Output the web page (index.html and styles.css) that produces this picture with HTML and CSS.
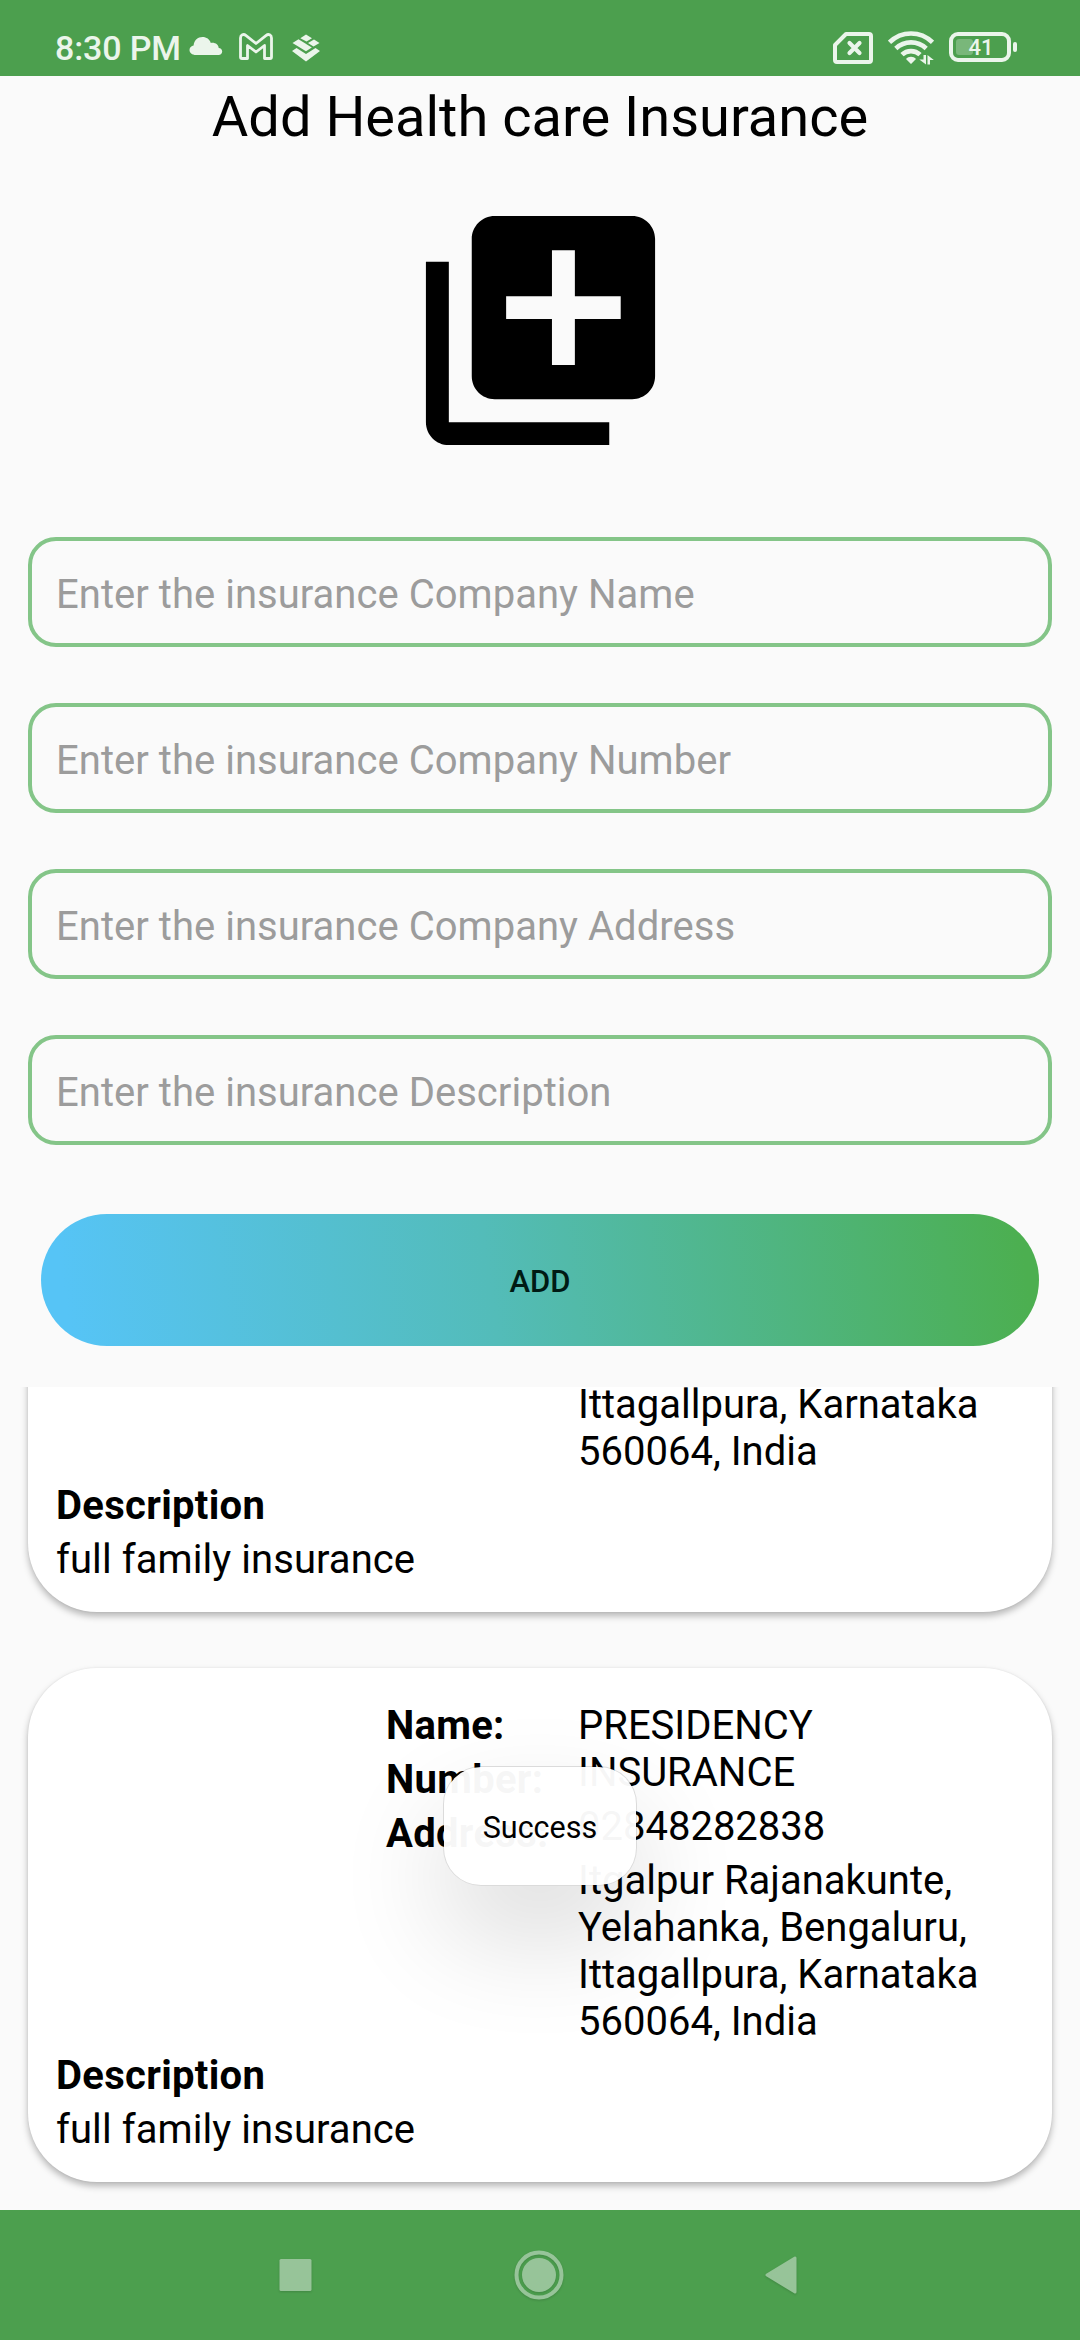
FILE: index.html
```html
<!DOCTYPE html>
<html lang="en">
<head>
<meta charset="utf-8">
<title>Add Health care Insurance</title>
<link rel="stylesheet" href="styles.css">
</head>
<body>
<div class="screen">
  <header class="status">
    <span class="time">8:30 PM</span>
    <svg class="cloud" width="34" height="20" viewBox="0 0 34 20"><path d="M7 19C3 19 .5 16.800.5 14c0-2.600 1.900-4.300 4.100-4.600C5 4.500 8.800 1 13.500 1c4 0 7.100 2.300 8.300 5.900C26.500 6.300 29.500 8.700 29.700 12c2 .2 3.500 1.600 3.500 3.500S31.700 19 29.500 19z" fill="currentColor"/></svg>
    <svg class="mail" width="34" height="28" viewBox="0 0 34 28"><path d="M3 25.500a1.500 1.500 0 0 1-1.500-1.500V5C1.500 1.800 4.500.6 6.800 2.400L17 10.500 27.200 2.400C29.500.6 32.500 1.800 32.500 5v19a1.500 1.500 0 0 1-1.500 1.500h-5.500V12.500L17 19 8.500 12.500v13z" fill="none" stroke="currentColor" stroke-width="2.800" stroke-linejoin="round"/></svg>
    <svg class="layers" width="28" height="28" viewBox="0 0 28 28"><g fill="currentColor"><path d="M14 .5 20 4.200 14.500 7.600 8.300 4.200z"/><path d="M22 5.600 27.500 9 21.500 12.500 16 9z"/><path d="M6.500 5.300 19.800 13.600 14 17.200.5 9z"/><path d="M4.500 14 14 20 23.500 14 28 17 14 27.500 0 17z"/></g></svg>
    <svg class="sim" width="40" height="32" viewBox="0 0 40 32"><path d="M13 2h23a2 2 0 0 1 2 2v24a2 2 0 0 1-2 2H4a2 2 0 0 1-2-2V13z" fill="none" stroke="currentColor" stroke-width="4" stroke-linejoin="round"/><path d="M16.500 11l10 10M26.500 11l-10 10" stroke="currentColor" stroke-width="4.200" stroke-linecap="round"/></svg>
    <svg class="wifi" width="46" height="36" viewBox="0 0 46 36"><g fill="none" stroke="currentColor" stroke-width="4.600"><path d="M1.500 12.300C13.500.5 32.500.5 44.500 12.300"/><path d="M7.800 18.500c8.500-8.200 21.900-8.200 30.400 0"/><path d="M14 24.700c5-4.800 13-4.800 18 0"/></g><path d="M18 29c2.500-3.100 7.500-3.100 10 0l-5 5zM35.500 25H38v9.500L31.300 29.500h4.200zM42 34.500h-2.500V25l6.300 5H42z" fill="currentColor"/></svg>
    <div class="battery"><span class="charge"></span><span class="level">41</span></div>
    <span class="nub"></span>
  </header>

  <main class="page">
    <h1 class="title">Add Health care Insurance</h1>
    <svg class="hero" viewBox="0 0 24 24"><path d="M4 6H2v14c0 1.100.9 2 2 2h14v-2H4V6zm16-4H8c-1.100 0-2 .9-2 2v12c0 1.100.9 2 2 2h12c1.100 0 2-.9 2-2V4c0-1.100-.9-2-2-2zm-1 9h-4v4h-2v-4H9V9h4V5h2v4h4v2z"/></svg>
    <form class="form">
      <input class="field" type="text" placeholder="Enter the insurance Company Name">
      <input class="field" type="text" placeholder="Enter the insurance Company Number">
      <input class="field" type="text" placeholder="Enter the insurance Company Address">
      <input class="field" type="text" placeholder="Enter the insurance Description">
      <button class="add" type="button">ADD</button>
    </form>
    <section class="list">
      <article class="card card-scrolled">
        <div class="info">
          <div class="labels"></div>
          <div class="values"><p>Ittagallpura, Karnataka<br>560064, India</p></div>
        </div>
        <p class="strong">Description</p>
        <p class="text">full family insurance</p>
      </article>
      <article class="card">
        <div class="info">
          <div class="labels"><p>Name:</p><p>Number:</p><p>Address:</p></div>
          <div class="values"><p>PRESIDENCY<br>INSURANCE</p><p>02848282838</p><p>Itgalpur Rajanakunte,<br>Yelahanka, Bengaluru,<br>Ittagallpura, Karnataka<br>560064, India</p></div>
        </div>
        <p class="strong">Description</p>
        <p class="text">full family insurance</p>
      </article>
    </section>
  </main>

  <nav class="nav">
    <svg width="33" height="34" viewBox="0 0 33 34"><rect x=".5" y="1" width="32" height="32" rx="1.500" fill="currentColor"/></svg>
    <svg width="50" height="50" viewBox="0 0 50 50"><circle cx="25" cy="25" r="22.500" fill="none" stroke="currentColor" stroke-width="4"/><circle cx="25" cy="25" r="17" fill="currentColor"/></svg>
    <svg width="32" height="38" viewBox="0 0 32 38"><path d="M2 19 30 2v34z" fill="currentColor" stroke="currentColor" stroke-width="3" stroke-linejoin="round"/></svg>
  </nav>
  <div class="toast">Success</div>
</div>
</body>
</html>
```

FILE: styles.css
```css
* { box-sizing: border-box; }
body { margin: 0; font-family: Roboto, sans-serif; color: #000; }
p, h1 { margin: 0; }
svg { display: block; flex: none; }

.screen {
  position: relative;
  display: flex;
  flex-direction: column;
  width: 1080px;
  height: 2340px;
  background: #fafafa;
  overflow: hidden;
}

/* Status bar */
.status {
  display: flex;
  align-items: center;
  flex: none;
  height: 76px;
  padding: 20px 63px 0 55px;
  background: #4c9f4e;
  color: #ebf5eb;
}
.time { width: 134px; font-size: 34px; font-weight: 500; line-height: 40px; letter-spacing: -.15px; white-space: nowrap; }
.cloud { margin-top: -5px; }
.mail { margin-left: 16px; margin-top: -2px; }
.layers { margin-left: 19px; }
.sim { margin-left: auto; }
.wifi { margin-left: 15px; }
.battery {
  position: relative;
  width: 62px;
  height: 30px;
  margin: -2px 2px 0 15px;
  border: 4px solid;
  border-radius: 9px;
  text-align: center;
  font-size: 22px;
  font-weight: 500;
  line-height: 24px;
}
.charge { position: absolute; left: 3px; top: 3px; width: 17px; height: 16px; border-radius: 3px; background: rgba(255, 255, 255, .25); }
.level { position: relative; left: 1px; }
.nub { width: 4px; height: 10px; margin-top: -2px; border-radius: 2px; background: currentColor; }

/* Form */
.page { display: flex; flex-direction: column; flex: 1; min-height: 0; }
.title { height: 117px; padding-top: 8px; text-align: center; font-size: 56px; font-weight: 400; line-height: 66px; }
.hero { width: 275px; height: 275px; margin: 0 auto; }
.form { display: flex; flex-direction: column; gap: 56px; padding: 69px 28px 0; }
.field {
  height: 110px;
  padding: 4px 24px 0;
  border: 4px solid #84c588;
  border-radius: 28px;
  background: transparent;
  font: 400 40px/47px Roboto, sans-serif;
  letter-spacing: .03px;
}
.field::placeholder { color: #9c9c9c; opacity: 1; }
.add {
  height: 132px;
  margin: 13px 13px 0;
  padding: 3px 0 0;
  border: 0;
  border-radius: 66px;
  background: linear-gradient(82deg, #56c4f6 3%, #53bcb9 45%, #4caf50 98%);
  color: #001a14;
  font: 500 31px/36px Roboto, sans-serif;
}

/* Saved policies */
.list {
  display: flex;
  flex-direction: column;
  justify-content: flex-end;
  gap: 56px;
  flex: 1;
  min-height: 0;
  margin-top: 41px;
  padding: 0 28px 28px;
  overflow: hidden;
}
.card {
  flex: none;
  padding: 27px 28px 29px;
  border-radius: 69px;
  background: #fff;
  box-shadow: 0 4px 7px rgba(0, 0, 0, .28), 0 0 2px rgba(0, 0, 0, .08);
  font-size: 40px;
  line-height: 47px;
}
.card-scrolled { border-radius: 0 0 69px 69px; }
.card p { padding-top: 7px; }
.info { display: grid; grid-template-columns: 192px 446px; justify-content: end; }
.labels, .strong { font-weight: 700; letter-spacing: .3px; }
.text { letter-spacing: .07px; }

/* System navigation */
.nav {
  display: flex;
  align-items: center;
  justify-content: space-between;
  flex: none;
  height: 130px;
  padding: 0 283px 0 279px;
  background: #4c9f4e;
  color: #97c499;
}
.nav svg { filter: drop-shadow(0 1px 1px rgba(0, 0, 0, .15)); }

.toast {
  position: absolute;
  left: 443px;
  top: 1766px;
  width: 194px;
  height: 120px;
  border: 1px solid rgba(0, 0, 0, .14);
  border-radius: 38px;
  background: rgba(255, 255, 255, .965);
  background-clip: padding-box;
  box-shadow: 0 50px 110px rgba(0, 0, 0, .14);
  text-align: center;
  font-size: 30.5px;
  line-height: 121px;
}
```
